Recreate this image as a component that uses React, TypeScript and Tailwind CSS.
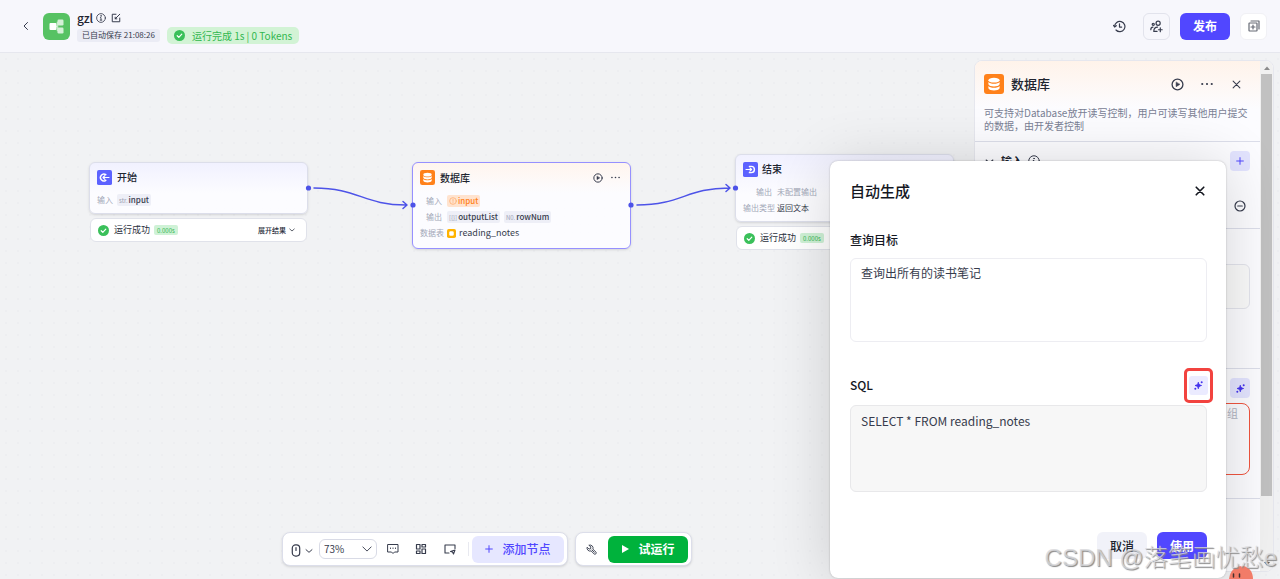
import React from 'react';

const stroke = {
  fill: 'none',
  stroke: 'currentColor',
  strokeLinecap: 'round',
  strokeLinejoin: 'round',
} as const;

type IconProps = { className?: string };

function Icon({ className, width = 2, children }: IconProps & { width?: number; children: React.ReactNode }) {
  return (
    <svg viewBox="0 0 24 24" className={className} {...stroke} strokeWidth={width} aria-hidden="true">
      {children}
    </svg>
  );
}

const ChevronDown = ({ className }: IconProps) => (
  <Icon className={className} width={3}><path d="M3 8l9 8 9-8" /></Icon>
);
const Cross = ({ className, width = 2.8 }: IconProps & { width?: number }) => (
  <Icon className={className} width={width}><path d="M3 3l18 18M21 3L3 21" /></Icon>
);
const Plus = ({ className }: IconProps) => (
  <Icon className={className} width={3}><path d="M12 2v20M2 12h20" /></Icon>
);
const Info = ({ className }: IconProps) => (
  <Icon className={className}>
    <circle cx="12" cy="12" r="10.5" />
    <path d="M10.5 11h1.500v6M10 17h4" />
    <circle cx="12" cy="7" r="0.6" fill="currentColor" />
  </Icon>
);
const PlayCircle = ({ className }: IconProps) => (
  <Icon className={className} width={2.4}>
    <circle cx="12" cy="12" r="10" />
    <path d="M9.500 8v8l6.500-4z" fill="currentColor" strokeWidth="1" />
  </Icon>
);
const More = ({ className }: IconProps) => (
  <svg viewBox="0 0 24 24" className={className} fill="currentColor" aria-hidden="true">
    <circle cx="2.500" cy="12" r="2.200" />
    <circle cx="12" cy="12" r="2.200" />
    <circle cx="21.500" cy="12" r="2.200" />
  </svg>
);
const CheckBadge = ({ className }: IconProps) => (
  <svg viewBox="0 0 24 24" className={className} aria-hidden="true">
    <circle cx="12" cy="12" r="12" fill="#3ac05a" />
    <path d="M7 12.500l3.500 3.500 6.500-7" fill="none" stroke="#fff" strokeWidth="2.600" strokeLinecap="round" strokeLinejoin="round" />
  </svg>
);
const Sparkle = ({ className }: IconProps) => (
  <svg viewBox="0 0 24 24" className={className} fill="currentColor" aria-hidden="true">
    <path d="M11.500 3.500c1 5 3 7.300 8.500 8.500-5.500 1.200-7.500 3.500-8.500 8.500-1-5-3-7.300-8.500-8.500 5.500-1.200 7.500-3.500 8.500-8.500z" stroke="currentColor" strokeWidth="2.500" strokeLinejoin="round" />
    <circle cx="20.500" cy="3.500" r="2.700" />
    <circle cx="3.500" cy="20.500" r="2.700" />
  </svg>
);

function DatabaseIcon({ className }: IconProps) {
  return (
    <svg viewBox="0 0 20 20" className={className} aria-hidden="true">
      <rect width="20" height="20" rx="3" fill="#ff811a" />
      <ellipse cx="10" cy="6.200" rx="5.600" ry="2.400" fill="#fff" />
      <path d="M4.400 8c1.500 2.400 9.700 2.400 11.200 0v2.300c-1 3-10.200 3-11.200 0z" fill="#fff" />
      <path d="M4.400 12c1.500 2.400 9.700 2.400 11.200 0v2.300c-1 3-10.200 3-11.200 0z" fill="#fff" />
    </svg>
  );
}

function StartIcon({ className }: IconProps) {
  return (
    <svg viewBox="0 0 20 20" className={className} aria-hidden="true">
      <rect width="20" height="20" rx="2.500" fill="#5c62ff" />
      <path d="M11.800 6.200a4.600 4.600 0 1 0 0 7.600" fill="none" stroke="#fff" strokeWidth="1.900" strokeLinecap="round" />
      <path d="M16 10H8.500M10.500 7.500L8 10l2.500 2.500" fill="none" stroke="#fff" strokeWidth="1.600" strokeLinecap="round" strokeLinejoin="round" />
    </svg>
  );
}

function EndIcon({ className }: IconProps) {
  return (
    <svg viewBox="0 0 20 20" className={className} aria-hidden="true">
      <rect width="20" height="20" rx="2.500" fill="#5c62ff" />
      <path d="M8.500 5.800h2.500a4.200 4.200 0 0 1 0 8.400H8.500" fill="none" stroke="#fff" strokeWidth="1.900" strokeLinecap="round" />
      <path d="M4 10h7.300M9.200 7.800l2.300 2.200-2.300 2.200" fill="none" stroke="#fff" strokeWidth="1.500" strokeLinecap="round" strokeLinejoin="round" />
    </svg>
  );
}

function Header() {
  return (
    <header className="flex h-[53px] shrink-0 items-center border-b border-[#e6e7ee] bg-[#f7f7fc] pr-[13px] pl-5 text-[#373c4d]">
      <button aria-label="返回" className="flex size-3 items-center justify-center">
        <Icon className="size-3" width={2}><path d="M15 5l-7 7 7 7" /></Icon>
      </button>
      <svg viewBox="0 0 27 27" className="ml-[11px] size-[27px]" aria-hidden="true">
        <rect width="27" height="27" rx="6" fill="#57c263" />
        <path d="M12 13.500h2.500V9.500H16M14.500 13.500v4H16" fill="none" stroke="#bfe8c3" strokeWidth="1.500" />
        <rect x="6.500" y="10" width="7" height="7" rx="1" fill="#fff" />
        <rect x="14.500" y="6.500" width="6" height="6" rx="1.200" fill="#d5f0d7" />
        <rect x="14.500" y="14.500" width="6" height="6" rx="1.200" fill="#d5f0d7" />
      </svg>
      <div className="ml-[7px]">
        <div className="flex h-4 items-center">
          <h1 className="text-xs font-medium text-[#1f2430]">gzl</h1>
          <Info className="ml-[3px] size-[10px]" />
          <button aria-label="编辑" className="ml-[5px]">
            <Icon className="size-[10px]" width={2.4}>
              <path d="M12 3H3v18h18v-9" />
              <path d="M10 14L21 3M10 10v4h4" />
            </Icon>
          </button>
        </div>
        <div className="mt-[2px] flex h-[15px] items-center">
          <span className="flex h-[13px] items-center rounded-[3px] bg-[#ebecf5] px-[5px] text-[8px] whitespace-nowrap">已自动保存 21:08:26</span>
          <span className="ml-[7px] flex h-[17px] items-center rounded-[5px] bg-[#d2f3d5] px-[7px] text-[10px] whitespace-nowrap text-[#32b74f]">
            <CheckBadge className="mr-[7px] size-[11px]" />
            运行完成 1s | 0 Tokens
          </span>
        </div>
      </div>
      <div className="ml-auto flex items-center">
        <button aria-label="历史记录" className="mr-[17px]">
          <Icon className="size-[13px]" width={2.200}>
            <path d="M3 12a9.500 9.500 0 1 1 2.500 6.500" />
            <path d="M1 10l2 3 3-2.500M12 7v6h4" />
          </Icon>
        </button>
        <button aria-label="协作" className="mr-[10px] flex size-[27px] items-center justify-center rounded-md border border-[#e2e3ec]">
          <Icon className="size-[13px]" width={2.200}>
            <circle cx="15" cy="6" r="3.800" />
            <circle cx="6" cy="8" r="2" />
            <path d="M7 21c0-5 3-8 7-8M1.500 18c0-3 1.500-5 4-5M7 21h6M19 14.500v7M15.500 18h7" />
          </Icon>
        </button>
        <button className="h-[27px] w-[50px] rounded-md bg-[#5147ff] text-xs font-bold text-white">发布</button>
        <button aria-label="复制" className="ml-[10px] flex size-[27px] items-center justify-center rounded-md border border-[#f1f1f5] bg-white text-[#666a75]">
          <Icon className="size-3" width={2.4}>
            <rect x="2" y="6" width="16" height="16" rx="1" />
            <path d="M6 2h16v16M10 10v8M6 14h8" />
          </Icon>
        </button>
      </div>
    </header>
  );
}

function Tag({ prefix, children }: { prefix: string; children: React.ReactNode }) {
  return (
    <span className="flex h-3 items-center gap-px rounded-[2px] bg-[#eeeff7] px-[2px] text-[8px] font-medium text-[#373c4d]">
      <span className="text-[6px] font-normal text-[#9aa0b4]">{prefix}</span>
      {children}
    </span>
  );
}

function RunResult({ expand }: { expand?: boolean }) {
  return (
    <div className="flex h-6 items-center rounded-md border border-[#e0e2ea] bg-white px-[7px] text-[9px] text-[#2b303d]">
      <CheckBadge className="size-[11px]" />
      <span className="ml-[5px]">运行成功</span>
      <span className="ml-1 flex h-[10px] items-center rounded-[2px] bg-[#cff2d6] px-[3px] text-[6px] text-[#2fb251]">0.000s</span>
      {expand && (
        <button className="mr-1 ml-auto flex items-center gap-[3px] text-[7px] font-medium">
          展开结果
          <ChevronDown className="size-[6px]" />
        </button>
      )}
    </div>
  );
}

const label = 'text-right text-[8px] leading-3 whitespace-nowrap text-[#a3a8b8]';
const nodeTitle = 'text-[10px] leading-[13px] font-medium text-[#20242f]';

function StartNode() {
  return (
    <section className="absolute top-[109px] left-[89px] w-[219px]">
      <div className="h-[52px] rounded-md border border-[#dcdeea] bg-linear-to-b from-[#f1f1ff] to-[#fcfcff] to-60% px-[7px] pt-[7px] shadow-sm">
        <div className="flex h-[15px] items-start gap-[5px]">
          <StartIcon className="size-[15px]" />
          <h2 className={nodeTitle}>开始</h2>
        </div>
        <div className="mt-[9px] flex h-3 items-center gap-1">
          <span className={label}>输入</span>
          <Tag prefix="str.">input</Tag>
        </div>
      </div>
      <div className="mt-1 px-px"><RunResult expand /></div>
    </section>
  );
}

function DatabaseNode() {
  return (
    <section className="absolute top-[109px] left-[412px] h-[87px] w-[219px] rounded-md border border-[#9690ff] bg-linear-to-b from-[#fff5ee] to-[#fcfcff] to-35% px-[7px] pt-[7px] shadow-sm">
      <div className="flex h-[15px] items-center text-[#373c4d]">
        <DatabaseIcon className="size-[15px]" />
        <h2 className="ml-[5px] text-[10px] leading-[13px] font-medium text-[#20242f]">数据库</h2>
        <button aria-label="运行" className="ml-auto"><PlayCircle className="size-[10px]" /></button>
        <button aria-label="更多" className="mr-[3px] ml-2"><More className="size-[9px]" /></button>
      </div>
      <div className="mt-[10px] grid grid-cols-[22px_auto] items-center justify-start gap-x-[5px] gap-y-1">
        <span className={label}>输入</span>
        <span className="flex h-3 items-center gap-px justify-self-start rounded-[2px] bg-[#ffe3cf] px-[2px] text-[8px] font-medium text-[#ff811a]">
          <Icon className="size-2 opacity-60"><circle cx="12" cy="12" r="10" /><path d="M12 7v6M12 17v.1" /></Icon>
          input
        </span>
        <span className={label}>输出</span>
        <span className="flex h-3 gap-1">
          <Tag prefix="[{}]">outputList</Tag>
          <Tag prefix="N0.">rowNum</Tag>
        </span>
        <span className={label}>数据表</span>
        <span className="flex h-3 items-center gap-[3px] text-[9px] text-[#373c4d]">
          <svg viewBox="0 0 20 20" className="size-[9px]" aria-hidden="true">
            <rect width="20" height="20" rx="4" fill="#ffb300" />
            <rect x="5" y="5" width="10" height="10" rx="3" fill="#fff" />
          </svg>
          reading_notes
        </span>
      </div>
    </section>
  );
}

function EndNode() {
  return (
    <section className="absolute top-[101px] left-[735px] w-[219px]">
      <div className="h-[68px] rounded-md border border-[#dcdeea] bg-linear-to-b from-[#f1f1ff] to-[#fcfcff] to-60% px-[7px] pt-[7px] shadow-sm">
        <div className="flex h-[15px] items-start gap-1">
          <EndIcon className="size-[15px]" />
          <h2 className={nodeTitle}>结束</h2>
        </div>
        <div className="mt-[9px] grid grid-cols-[29px_auto] justify-start gap-x-[5px] gap-y-1">
          <span className={label}>输出</span>
          <span className="h-3 text-[8px] leading-3 text-[#a3a8b8]">未配置输出</span>
          <span className={label}>输出类型</span>
          <span className="h-3 text-[8px] leading-3 text-[#373c4d]">返回文本</span>
        </div>
      </div>
      <div className="mt-1 px-px"><RunResult /></div>
    </section>
  );
}

function Edges() {
  return (
    <svg className="absolute top-0 left-0 h-[220px] w-[760px]" viewBox="0 0 760 220" aria-hidden="true">
      <g fill="none" stroke="#4d53e8" strokeWidth="1.500" strokeLinecap="round" strokeLinejoin="round">
        <path d="M314 135C358 135 364 152 406 152M403 148.500l4 3.500-4 3.500" />
        <path d="M637 152C681 152 687 135 729 135M726 131.500l4 3.500-4 3.500" />
      </g>
      <g fill="#4d53e8">
        <circle cx="308.500" cy="135" r="2.600" />
        <circle cx="413" cy="152" r="2.600" />
        <circle cx="631" cy="152" r="2.600" />
        <circle cx="735.500" cy="135" r="2.600" />
      </g>
    </svg>
  );
}

function Toolbar() {
  return (
    <div className="absolute bottom-[13px] left-[282px] flex gap-[7px] text-[#373c4d]">
      <div className="flex h-[34px] items-center rounded-lg border border-[#dcdeea] bg-white pr-[3px] pl-2 shadow-sm">
        <button aria-label="鼠标模式" className="flex items-center gap-1 pt-[3px]">
          <svg viewBox="0 0 10 14" className="h-[13px] w-[10px]" {...stroke} strokeWidth="1.300" aria-hidden="true">
            <rect x="1" y="1" width="8" height="12" rx="3.500" />
            <path d="M5 4v3" />
          </svg>
          <ChevronDown className="size-2" />
        </button>
        <div className="ml-[6px] grid items-center">
          <select aria-label="缩放" className="col-start-1 row-start-1 h-5 w-[58px] appearance-none rounded-[6px] border border-[#d9dbe6] bg-white pl-1 text-[10px] leading-4">
            <option>73%</option>
          </select>
          <Icon className="pointer-events-none col-start-1 row-start-1 mr-[5px] size-[10px] justify-self-end" width={2.2}><path d="M2 7l10 10L22 7" /></Icon>
        </div>
        <button aria-label="注释" className="ml-[10px]">
          <Icon className="size-3"><path d="M2 3h20v15h-7l-3 3-3-3H2zM7 10v1M12 10v1M17 10v1" /></Icon>
        </button>
        <button aria-label="整理布局" className="ml-4">
          <Icon className="size-3" width={2.4}><path d="M3 3h7v9H3zM14 3h7v5h-7zM14 12h7v9h-7zM3 16h7v5H3z" /></Icon>
        </button>
        <button aria-label="缩略图" className="ml-[17px]">
          <Icon className="size-3" width={2.2}><path d="M10 20H2V4h20v7" /><path d="M13 17l9-3-3 8-2-4z" /></Icon>
        </button>
        <span className="ml-3 h-[14px] w-px bg-[#e8e9f0]" />
        <button className="ml-[3px] flex h-[27px] w-[92px] items-center justify-center gap-[9px] rounded-md bg-[#e6e7ff] text-xs font-medium text-[#5147ff]">
          <Plus className="size-2" />
          添加节点
        </button>
      </div>
      <div className="flex h-[34px] items-center rounded-lg border border-[#dcdeea] bg-white pr-[3px] pl-[10px] shadow-sm">
        <button aria-label="调试">
          <Icon className="size-[11px]" width={2}><path d="M7 2.500a6.500 6.500 0 0 1 8 8.500l6.500 6.500a2.800 2.800 0 0 1-4 4L11 15a6.500 6.500 0 0 1-8.500-8l4 4 3.500-.5.500-3.500zM13 13l5 5" /></Icon>
        </button>
        <button className="ml-[11px] flex h-[27px] w-20 items-center justify-center gap-[9px] rounded-md bg-[#00b23c] text-xs font-bold text-white">
          <svg viewBox="0 0 8 8" className="size-2" fill="currentColor" aria-hidden="true"><path d="M1 0l7 4-7 4z" /></svg>
          试运行
        </button>
      </div>
    </div>
  );
}

function SidePanel() {
  return (
    <aside className="absolute top-[7px] right-[6px] bottom-[7px] flex w-[300px] overflow-hidden rounded-lg border border-[#e6e7ee] bg-[#fcfcff]">
      <div className="min-w-0 flex-1 text-[#373c4d]">
        <div className="h-[81px] border-b border-[#dcdeea] bg-linear-to-b from-[#fff3ea] to-[#fcfcff] to-60% px-[9px] pt-3">
          <div className="flex h-[22px] items-center">
            <DatabaseIcon className="size-5" />
            <h2 className="ml-[7px] text-[13px] font-medium text-[#20242f]">数据库</h2>
            <button aria-label="运行" className="ml-auto"><PlayCircle className="size-[13px]" /></button>
            <button aria-label="更多" className="ml-[17px]"><More className="size-3" /></button>
            <button aria-label="关闭面板" className="mr-[10px] ml-[19px]"><Cross className="size-[9px]" /></button>
          </div>
          <p className="mt-[11px] text-[10px] leading-[13px] text-[#7a8094]">可支持对Database放开读写控制，用户可读写其他用户提交的数据，由开发者控制</p>
        </div>
        <div className="h-[87px] border-b border-[#dcdeea] px-[10px] pt-[9px]">
          <div className="flex h-5 items-center">
            <ChevronDown className="size-[9px]" />
            <h3 className="ml-[7px] text-[11px] font-semibold text-[#20242f]">输入</h3>
            <Info className="ml-[5px] size-3" />
            <button aria-label="添加输入" className="ml-auto flex size-5 items-center justify-center rounded bg-[#e3e4ff] text-[#5147ff]"><Plus className="size-2" /></button>
          </div>
          <div className="mt-[29px] flex justify-end pr-1">
            <button aria-label="删除输入"><Icon className="size-3" width={2.4}><circle cx="12" cy="12" r="10" /><path d="M7.500 12h9" /></Icon></button>
          </div>
        </div>
        <div className="h-[140px] border-b border-[#dcdeea] px-[10px] pt-[35px]">
          <div className="h-[45px] rounded-md border border-[#e3e4ec] bg-[#fafafa]" />
        </div>
        <div className="h-[130px] border-b border-[#dcdeea] px-[10px] pt-[9px]">
          <div className="flex justify-end">
            <button aria-label="生成 SQL" className="flex size-5 items-center justify-center rounded bg-[#e3e4ff] text-[#4433ee]"><Sparkle className="size-[9px]" /></button>
          </div>
          <div className="mt-[5px] h-[72px] rounded-lg border border-[#f0553f] pt-px pr-[11px] text-right text-[11px] leading-4 text-[#b0b4c2]">组</div>
        </div>
      </div>
      <div className="flex w-[13px] flex-col items-center bg-[#f1f1f1]">
        <svg viewBox="0 0 12 13" className="h-[13px] w-3 shrink-0" fill="#8b8b8b" aria-hidden="true"><path d="M3 9h6L6 5.500z" /></svg>
        <div className="h-[422px] w-[11px] bg-[#c1c1c1]" />
        <svg viewBox="0 0 12 14" className="mt-auto h-[14px] w-3 shrink-0" fill="#505050" aria-hidden="true"><path d="M3 5h6L6 8.500z" /></svg>
      </div>
    </aside>
  );
}

const action = 'h-[27px] w-[50px] rounded-md text-xs';

function GenerateDialog() {
  return (
    <div
      role="dialog"
      aria-labelledby="dialog-title"
      className="absolute right-[54px] bottom-px flex h-[417px] w-[396px] flex-col rounded-lg bg-white pr-[19px] pl-5 shadow-[0_0_2px_rgba(0,0,0,0.25),0_4px_60px_rgba(0,0,0,0.16)]"
    >
      <div className="flex h-[60px] shrink-0 items-center justify-between text-[#14171f]">
        <h2 id="dialog-title" className="text-[15px] font-medium">自动生成</h2>
        <button aria-label="关闭" className="mr-[2px]"><Cross className="size-[10px]" width={4} /></button>
      </div>
      <label htmlFor="goal" className="mt-[9px] flex h-5 items-center text-[12px] font-medium text-[#14171f]">查询目标</label>
      <textarea
        id="goal"
        defaultValue="查询出所有的读书笔记"
        className="mt-2 h-[84px] shrink-0 resize-none rounded-md border border-[#ededf2] bg-white px-[10px] py-[5px] text-xs leading-[18px] text-[#373c4d]"
      />
      <div className="mt-[26px] flex h-[34px] shrink-0 items-center justify-between">
        <label htmlFor="sql" className="text-[12px] font-medium text-[#14171f]">SQL</label>
        <div className="-mr-[6px] rounded-[5px] border-[3px] border-[#f2433f] bg-white px-[2px] py-[5px]">
          <button aria-label="自动生成 SQL" className="flex h-[19px] w-[19px] items-center justify-center rounded-[3px] bg-[#ebebff] text-[#4433ee]"><Sparkle className="size-[9px]" /></button>
        </div>
      </div>
      <textarea
        id="sql"
        defaultValue="SELECT * FROM reading_notes"
        className="mt-[3px] h-[87px] shrink-0 resize-none rounded-md border border-[#e8e8ea] bg-[#f7f7f7] px-[10px] py-[6px] text-xs leading-[18px] text-[#373c4d]"
      />
      <div className="mt-[40px] flex justify-end gap-[10px]">
        <button className={`${action} bg-[#f1f2f9] font-medium text-[#20242f]`}>取消</button>
        <button className={`${action} bg-[#5147ff] font-semibold text-white`}>使用</button>
      </div>
    </div>
  );
}

export default function App() {
  return (
    <div className="flex h-screen min-w-0 flex-col overflow-hidden bg-[#f1f2f4] font-['Noto_Sans_CJK_SC',sans-serif] text-[#20242f]">
      <Header />
      <main className="relative min-h-0 flex-1 overflow-hidden bg-[radial-gradient(circle,#edeef1_1px,transparent_1px)] bg-size-[12px_12px]">
        <StartNode />
        <DatabaseNode />
        <EndNode />
        <Edges />
        <Toolbar />
        <SidePanel />
        <GenerateDialog />
        <svg viewBox="0 0 24 13" className="absolute right-[27px] bottom-0 h-[13px] w-6" aria-hidden="true">
          <path d="M0 13C1 5 6 0 13 0s11 6 11 13z" fill="#f27c68" />
          <path d="M4.500 8v3M10.500 8v3" stroke="#43302f" strokeWidth="1.500" strokeLinecap="round" />
        </svg>
        <div className="pointer-events-none absolute right-[3px] bottom-[5px] font-['Liberation_Sans','Noto_Sans_CJK_SC',sans-serif] text-[24px] leading-8 font-light whitespace-nowrap text-[#d9d9dc]/80 [text-shadow:1px_1px_1px_#888]">CSDN @落笔画忧愁e</div>
      </main>
    </div>
  );
}
